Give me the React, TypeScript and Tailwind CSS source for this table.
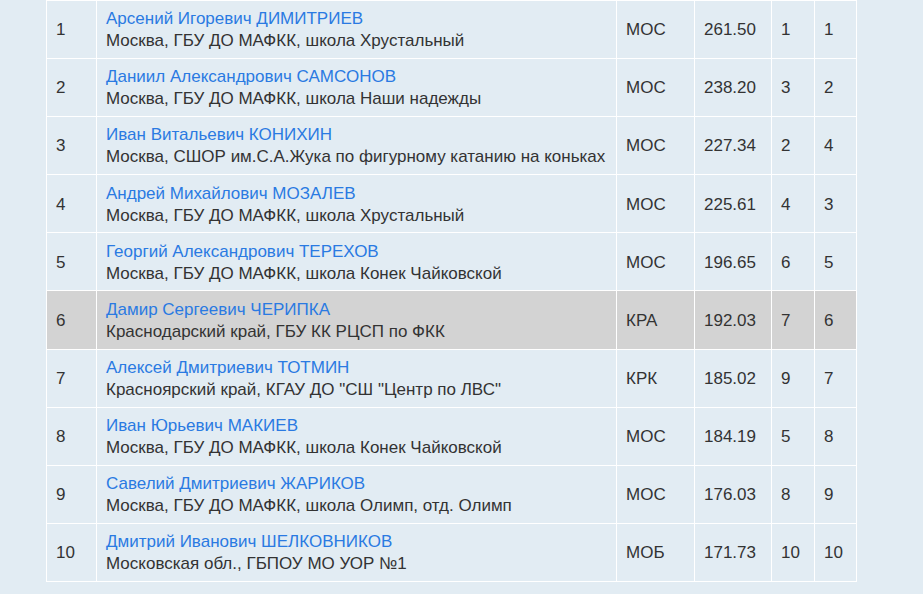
import React from 'react';

type Row = {
  place: number;
  name: string;
  club: string;
  region: string;
  points: string;
  sp: number;
  fs: number;
  highlight?: boolean;
};

const rows: Row[] = [
  { place: 1, name: 'Арсений Игоревич ДИМИТРИЕВ', club: 'Москва, ГБУ ДО МАФКК, школа Хрустальный', region: 'МОС', points: '261.50', sp: 1, fs: 1 },
  { place: 2, name: 'Даниил Александрович САМСОНОВ', club: 'Москва, ГБУ ДО МАФКК, школа Наши надежды', region: 'МОС', points: '238.20', sp: 3, fs: 2 },
  { place: 3, name: 'Иван Витальевич КОНИХИН', club: 'Москва, СШОР им.С.А.Жука по фигурному катанию на коньках', region: 'МОС', points: '227.34', sp: 2, fs: 4 },
  { place: 4, name: 'Андрей Михайлович МОЗАЛЕВ', club: 'Москва, ГБУ ДО МАФКК, школа Хрустальный', region: 'МОС', points: '225.61', sp: 4, fs: 3 },
  { place: 5, name: 'Георгий Александрович ТЕРЕХОВ', club: 'Москва, ГБУ ДО МАФКК, школа Конек Чайковской', region: 'МОС', points: '196.65', sp: 6, fs: 5 },
  { place: 6, name: 'Дамир Сергеевич ЧЕРИПКА', club: 'Краснодарский край, ГБУ КК РЦСП по ФКК', region: 'КРА', points: '192.03', sp: 7, fs: 6, highlight: true },
  { place: 7, name: 'Алексей Дмитриевич ТОТМИН', club: 'Красноярский край, КГАУ ДО "СШ "Центр по ЛВС"', region: 'КРК', points: '185.02', sp: 9, fs: 7 },
  { place: 8, name: 'Иван Юрьевич МАКИЕВ', club: 'Москва, ГБУ ДО МАФКК, школа Конек Чайковской', region: 'МОС', points: '184.19', sp: 5, fs: 8 },
  { place: 9, name: 'Савелий Дмитриевич ЖАРИКОВ', club: 'Москва, ГБУ ДО МАФКК, школа Олимп, отд. Олимп', region: 'МОС', points: '176.03', sp: 8, fs: 9 },
  { place: 10, name: 'Дмитрий Иванович ШЕЛКОВНИКОВ', club: 'Московская обл., ГБПОУ МО УОР №1', region: 'МОБ', points: '171.73', sp: 10, fs: 10 },
];

const cell = 'border border-white pl-[9px] pr-[6px] pt-[7.3px] pb-[5.8px] align-middle';

export default function App() {
  return (
    <div className="min-h-screen bg-[#e2ecf3] pl-[46px] text-[17px] leading-[22px] text-[#333] font-['Liberation_Sans',Arial,sans-serif]">
      <table className="w-[810px] table-fixed border-collapse border-t border-t-[#1a73e8]">
        <colgroup>
          <col className="w-[50px]" />
          <col className="w-[520px]" />
          <col className="w-[78px]" />
          <col className="w-[77px]" />
          <col className="w-[43px]" />
          <col className="w-[42px]" />
        </colgroup>
        <tbody>
          {rows.map((r) => (
            <tr key={r.place} className={r.highlight ? 'bg-[#d3d3d3]' : ''}>
              <td className={cell}>{r.place}</td>
              <td className={`${cell} whitespace-nowrap`}>
                <div className="text-[#2a7ae2]">{r.name}</div>
                <div>{r.club}</div>
              </td>
              <td className={cell}>{r.region}</td>
              <td className={cell}>{r.points}</td>
              <td className={cell}>{r.sp}</td>
              <td className={cell}>{r.fs}</td>
            </tr>
          ))}
        </tbody>
      </table>
    </div>
  );
}
